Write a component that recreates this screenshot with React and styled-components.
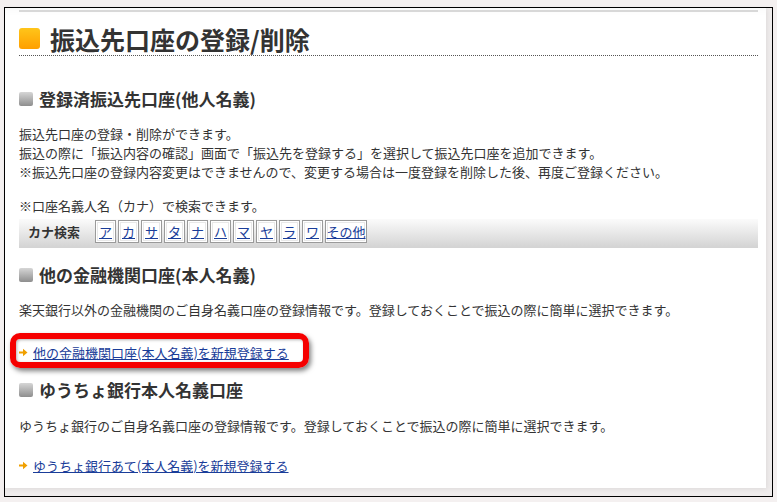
import React from "react";
import styled, { createGlobalStyle } from "styled-components";

const GlobalStyle = createGlobalStyle`
  body {
    margin: 0;
    background: #f4f0f0;
    font-family: "Noto Sans CJK JP", "Noto Sans", sans-serif;
    color: #333;
  }
`;

const Frame = styled.div`
  margin: 7px 4px 0;
  height: 488px;
  border: 1px solid #000;
  background: #efecec;
  padding: 0 6px 0 0;
`;

const Page = styled.div`
  height: 480px;
  background: #fff;
  box-shadow: 1px 1px 5px rgba(0, 0, 0, 0.08), inset 0 10px 10px -10px rgba(0, 0, 0, 0.05);
  padding: 2px 8px 0 14px;
  box-sizing: border-box;
`;

const Content = styled.div`
  border-top: 2px solid #d8d8d8;
`;

const Title = styled.h1`
  display: flex;
  align-items: center;
  gap: 10px;
  margin: 12px 0 0;
  height: 32px;
  padding-bottom: 2px;
  box-sizing: border-box;
  border-bottom: 1px dotted #555;
  font-size: 25px;
  line-height: 30px;
  font-weight: 700;
  color: #333;
`;

const TitleMark = styled.span`
  width: 21px;
  height: 21px;
  border-radius: 3px;
  background: linear-gradient(#ffc51a, #ff9f00);
  flex: none;
`;

const Heading = styled.h2`
  display: flex;
  align-items: center;
  gap: 6px;
  margin: ${(p) => p.$top}px 0 0;
  font-size: 17px;
  line-height: 20px;
  font-weight: 700;
  color: #333;
`;

const HeadingMark = styled.span`
  width: 14px;
  height: 14px;
  border-radius: 2px;
  background: linear-gradient(#d6d6d6, #8e8e8e);
  flex: none;
`;

const Text = styled.p`
  margin: ${(p) => p.$top}px 0 0;
  font-size: 13px;
  line-height: 19px;
  color: #333;
`;

const KanaBar = styled.div`
  display: flex;
  align-items: flex-start;
  margin-top: 4px;
  height: 29px;
  padding: 1px 0 0 9px;
  box-sizing: border-box;
  background: linear-gradient(#fbfbfb, #d3d3d3);
`;

const KanaLabel = styled.span`
  font-size: 13px;
  font-weight: 700;
  line-height: 23px;
  margin-right: 15px;
  color: #333;
`;

const KanaList = styled.div`
  display: flex;
  gap: 2px;
`;

const KanaButton = styled.a`
  display: flex;
  align-items: center;
  justify-content: center;
  flex: none;
  width: ${(p) => (p.$wide ? 42 : 21)}px;
  height: 23px;
  box-sizing: border-box;
  border: 1px solid #9a9a9a;
  background: #fff;
  box-shadow: inset 0 0 0 1px #fff, inset 0 0 0 2px #e8e8e8;
  font-size: 13px;
  white-space: nowrap;
  color: #1a3d99;
  text-decoration: underline;
  cursor: pointer;
`;

const LinkRow = styled.div`
  position: relative;
  display: flex;
  align-items: center;
  gap: 5px;
  margin-top: ${(p) => p.$top}px;
  line-height: 19px;
  font-size: 13px;
`;

const LinkText = styled.a`
  color: #1a3d99;
  text-decoration: underline;
  cursor: pointer;
`;

const Highlight = styled.div`
  position: absolute;
  left: -9px;
  top: -10px;
  width: 299px;
  height: 35px;
  box-sizing: border-box;
  border: 6px solid #f50000;
  border-radius: 10px;
  box-shadow: 2px 3px 5px rgba(0, 0, 0, 0.5), inset 1px 1px 3px rgba(0, 0, 0, 0.3);
  pointer-events: none;
`;

const Arrow = () => (
  <svg width="9" height="9" viewBox="0 0 9 9">
    <path d="M0 4.5h5.5" stroke="#f0a000" strokeWidth="2" />
    <path d="M4 0.8l4.5 3.7L4 8.2z" fill="#f0a000" />
  </svg>
);

const kana = ["ア", "カ", "サ", "タ", "ナ", "ハ", "マ", "ヤ", "ラ", "ワ"];

const App = () => (
  <>
    <GlobalStyle />
    <Frame>
      <Page>
        <Content>
          <Title>
            <TitleMark />
            振込先口座の登録/削除
          </Title>

          <Heading $top={33}>
            <HeadingMark />
            登録済振込先口座(他人名義)
          </Heading>
          <Text $top={15}>
            振込先口座の登録・削除ができます。
            <br />
            振込の際に「振込内容の確認」画面で「振込先を登録する」を選択して振込先口座を追加できます。
            <br />
            ※振込先口座の登録内容変更はできませんので、変更する場合は一度登録を削除した後、再度ご登録ください。
          </Text>
          <Text $top={15}>※口座名義人名（カナ）で検索できます。</Text>
          <KanaBar>
            <KanaLabel>カナ検索</KanaLabel>
            <KanaList>
              {kana.map((k) => (
                <KanaButton key={k}>{k}</KanaButton>
              ))}
              <KanaButton $wide>その他</KanaButton>
            </KanaList>
          </KanaBar>

          <Heading $top={17}>
            <HeadingMark />
            他の金融機関口座(本人名義)
          </Heading>
          <Text $top={15}>
            楽天銀行以外の金融機関のご自身名義口座の登録情報です。登録しておくことで振込の際に簡単に選択できます。
          </Text>
          <LinkRow $top={24}>
            <Arrow />
            <LinkText>他の金融機関口座(本人名義)を新規登録する</LinkText>
            <Highlight />
          </LinkRow>

          <Heading $top={18}>
            <HeadingMark />
            ゆうちょ銀行本人名義口座
          </Heading>
          <Text $top={16}>
            ゆうちょ銀行のご自身名義口座の登録情報です。登録しておくことで振込の際に簡単に選択できます。
          </Text>
          <LinkRow $top={21}>
            <Arrow />
            <LinkText>ゆうちょ銀行あて(本人名義)を新規登録する</LinkText>
          </LinkRow>
        </Content>
      </Page>
    </Frame>
  </>
);

export default App;
